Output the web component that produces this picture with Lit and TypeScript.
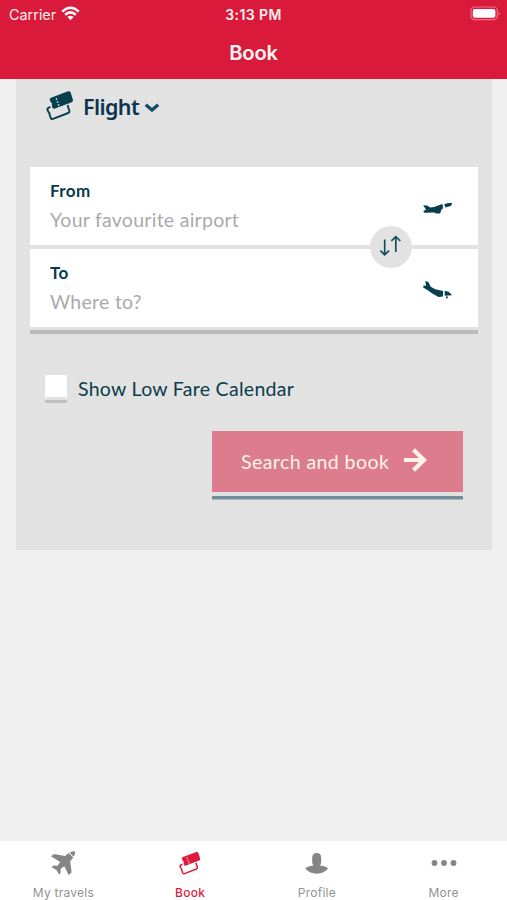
import { LitElement, html, svg, css } from "lit";
import { customElement, property } from "lit/decorators.js";

const tickets = html`<svg viewBox="0 0 28 31" fill="currentColor">
  <path fill-rule="evenodd" d="M5 7.7 L22 1.3 Q24 .7 24.7 2.6 L27 10 Q27.2 11.6 25.7 12.2 L9 18.6 Q7 19.2 6.3 17.2 L5.7 15.2 Q7 13.9 5 12.6 L3.7 10 Q3.3 8.5 5 7.7Z M9.6 8.4l.5 1.6 1.3-.5-.5-1.6Z M10.7 11.5l.5 1.6 1.3-.5-.5-1.6Z M11.7 14.5l.5 1.5 1.3-.5-.5-1.5Z"/>
  <path fill="none" stroke="currentColor" stroke-width="1.9" stroke-linejoin="round" d="M4.4 16.9 L2.4 17.8 Q1 18.4 1.5 20 L2.5 22 Q4 23.3 3.5 24.6 L4.8 28 Q5.5 29.4 7 28.8 L22.2 23 Q23.7 22.3 23.3 20.8 L21.5 15"/>
</svg>`;

const plane = html`<svg viewBox="0 0 25 25" fill="currentColor">
  <path d="M0 5.3 L3 3.1 L14 5 L17.6 2.1 L22.3 6.6 L19.2 10.2 L20.6 21.5 L17.6 24 L13.3 15.3 L9.6 18 L9.6 22.3 L8 23.6 L5.5 18.9 L.7 16.2 L2.3 14.5 L6.5 14.7 L9.2 10.9Z"/>
  <path d="M18.6 1.8 Q21 -.4 24 .4 Q24.5 3.4 22.5 5.5Z"/>
</svg>`;

const person = html`<svg viewBox="0 0 24 21" fill="currentColor">
  <path d="M7.2 5 Q7.2 0 11.7 0 Q16.2 0 16.2 5 V9 Q16 11.6 14.9 12.4 Q21 13 23.2 15.6 Q18.5 20.8 11.7 20.8 Q5 20.8 .2 15.6 Q2.6 13 8.5 12.4 Q7.4 11.6 7.2 9Z"/>
</svg>`;

const dots = html`<svg viewBox="0 0 26 8" fill="currentColor">
  ${[3.5, 13, 22.5].map((x) => svg`<circle cx=${x} cy="4" r="2.9" />`)}
</svg>`;

const takeOff = html`<svg viewBox="0 0 30 12" fill="currentColor">
  <path d="M.2 2.3 L4 2.5 L7.3 4.5 L11 4 L19.3 1.1 Q20.2 3.2 20 5.4 L18.5 6.5 L17.1 10.4 L13.3 10.6 L11.2 9.5 L1 9.7 L.4 8 L3 6.8Z"/>
  <path d="M21 1.5 Q25.5 -.7 29.2 .1 L28.2 2.7 L22.7 4.6Z"/>
</svg>`;

const landing = html`<svg viewBox="0 0 30 20" fill="currentColor">
  <path d="M2.3 .2 L5.2 .8 L7.8 5.8 L12.2 8.2 L20.2 9.9 L19.9 15.6 L15.5 15.9 L8.5 12 L4.8 9.2 L.2 6.4 L.5 4.6 L3 4.8Z"/>
  <path d="M21.7 10.1 Q26.2 10.2 28.8 14.2 L21.7 14.7Z M23 15.5h1.8v1.8h-1.8Z"/>
</svg>`;

@customElement("status-bar")
class StatusBar extends LitElement {
  static styles = css`
    :host { display: grid; grid-template-columns: 1fr auto 1fr; align-items: center; height: 28px; font-size: 14.4px; color: #fff0f1; }
    .carrier { display: flex; align-items: center; gap: 5px; padding-left: 9px; letter-spacing: 0; }
    .wifi { width: 19px; height: 15px; margin-top: -1px; }
    .time { font-weight: 600; font-size: 14px; letter-spacing: .4px; }
    .battery { justify-self: end; width: 31px; height: 15px; margin: -1px 6px 0 0; }
  `;
  render() {
    return html`
      <div class="carrier"><span>Carrier</span>
        <svg class="wifi" viewBox="0 0 19 15" fill="none" stroke="#fff" stroke-width="2.5">
          <path d="M1.2 5.6 Q9.5 -2.1 17.8 5.6 M4.1 8.8 Q9.5 3.9 14.9 8.8"/>
          <path fill="#fff" stroke="none" d="M6.4 11 Q9.5 8.4 12.6 11 L9.5 14.2Z"/>
        </svg>
      </div>
      <div class="time">3:13 PM</div>
      <svg class="battery" viewBox="0 0 31 15">
        <rect x=".9" y="1" width="26.4" height="12.6" rx="3.6" fill="none" stroke="#ea7085" stroke-width="1.2"/>
        <rect x="2.8" y="2.9" width="22.6" height="8.8" rx="2" fill="#fff"/>
        <path d="M28.6 5.2 Q31 7.3 28.6 9.4Z" fill="#ea7085"/>
      </svg>`;
  }
}

@customElement("airport-field")
class AirportField extends LitElement {
  @property() label = "";
  @property() hint = "";
  @property({ attribute: false }) icon: unknown;
  static styles = css`
    :host { display: flex; box-sizing: border-box; height: 78px; padding: 11px 25px 0 20px; justify-content: space-between; background: #fff; font-family: Lato, sans-serif; }
    .label { font-size: 17px; line-height: 25px; font-weight: 700; color: #073b49; letter-spacing: .4px; }
    .hint { font-size: 19.5px; line-height: 34px; color: #aaa; letter-spacing: .27px; }
    .icon { display: flex; align-items: center; width: 30px; height: 61px; color: #073f50; }
    .icon svg { display: block; width: 30px; }
  `;
  render() {
    return html`<div><div class="label">${this.label}</div><div class="hint">${this.hint}</div></div>
      <div class="icon">${this.icon}</div>`;
  }
}

@customElement("tab-bar")
class TabBar extends LitElement {
  static styles = css`
    :host { display: grid; grid-template-columns: repeat(4, 1fr); height: 59px; background: #fff; color: #929292; }
    .tab { display: flex; flex-direction: column; align-items: center; font-size: 12px; font-weight: 400; letter-spacing: .25px; }
    .active { color: #dc1b3d; font-weight: 500; }
    .icon { display: flex; align-items: center; justify-content: center; height: 44px; color: #858585; }
    .active .icon { color: #dc1b3d; }
    .name { line-height: 15px; }
    .plane svg { display: block; width: 25px; }
    .book svg { display: block; width: 22px; }
    .profile svg { display: block; width: 24px; }
    .more svg { display: block; width: 26px; }
  `;
  render() {
    const tabs = [
      { key: "plane", name: "My travels", icon: plane },
      { key: "book", name: "Book", icon: tickets },
      { key: "profile", name: "Profile", icon: person },
      { key: "more", name: "More", icon: dots },
    ];
    return tabs.map((t) => html`<div class="tab ${t.key === "book" ? "active" : ""}">
      <div class="icon ${t.key}">${t.icon}</div><div class="name">${t.name}</div></div>`);
  }
}

@customElement("app-root")
class AppRoot extends LitElement {
  static styles = css`
    :host { display: flex; flex-direction: column; height: 900px; background: #f0f0f0; font-family: Inter, sans-serif; }
    header { height: 79px; background: #da1a3a; color: #fff; }
    h1 { margin: 0; text-align: center; font-size: 20.2px; line-height: 49px; font-weight: 600; letter-spacing: -.25px; color: #fff5f5; }
    main { flex: 1; padding: 0 15px 0 16px; }
    .panel { box-sizing: border-box; height: 471px; padding: 11px 14px 0; background: #e2e2e2; font-family: Lato, sans-serif; }
    .kind { display: flex; height: 77px; padding-left: 16px; color: #073f50; }
    .tickets svg { display: block; width: 28px; height: 31px; }
    .kind-name { margin-left: 9px; font: 600 21.5px/33px "Noto Sans", sans-serif; color: #0a3450; letter-spacing: -.6px; }
    .chevron { width: 16px; height: 11px; margin: 12px 0 0 5px; }
    .fields { position: relative; display: flex; flex-direction: column; gap: 4px; }
    .fields::after { content: ""; height: 4px; margin-top: -1px; background: #bababa; }
    .swap { position: absolute; right: 66px; top: 59px; width: 42px; height: 42px; border-radius: 50%; background: #e2e2e2; }
    .swap svg { display: block; }
    .option { display: flex; align-items: flex-start; margin: 41px 0 0 15px; color: #0b3d4b; font-size: 19.5px; line-height: 27px; letter-spacing: .29px; }
    .check { width: 22px; height: 22px; margin-right: 11px; background: #fff; border-bottom: 3px solid #e2e2e2; box-shadow: 0 3px #c0c0c0; }
    .action { display: flex; align-items: center; box-sizing: border-box; width: 251px; height: 61px; margin: 29px 15px 0 auto; padding-left: 29px; background: #dd7c8d; color: #fff3e9; font-size: 19.5px; box-shadow: 0 4px #e2e2e2, 0 7.5px #728f99; }
    .action-text { width: 163px; letter-spacing: .43px; line-height: 60px; }
    .arrow { width: 23px; height: 24px; margin-top: -3px; }
  `;
  render() {
    return html`
      <header><status-bar></status-bar><h1>Book</h1></header>
      <main><section class="panel">
        <div class="kind">
          <div class="tickets">${tickets}</div>
          <div class="kind-name">Flight</div>
          <svg class="chevron" viewBox="0 0 16 11"><path d="M1.8 2.8 L8 8 L14.2 2.8" fill="none" stroke="#174d62" stroke-width="3.4"/></svg>
        </div>
        <div class="fields">
          <airport-field label="From" hint="Your favourite airport" .icon=${takeOff}></airport-field>
          <airport-field label="To" hint="Where to?" .icon=${landing}></airport-field>
          <div class="swap"><svg viewBox="0 0 42 42" fill="none" stroke="#174c5c" stroke-width="1.7">
            <path d="M14.7 13.5V28.5 M10.4 24.6l4.3 4.3 4.3-4.3 M25.8 26V11 M21.3 15l4.5-4.4 4.5 4.4"/></svg></div>
        </div>
        <div class="option"><div class="check"></div><span>Show Low Fare Calendar</span></div>
        <div class="action"><span class="action-text">Search and book</span>
          <svg class="arrow" viewBox="0 0 23 24" fill="none" stroke="#fff3e9" stroke-width="4.2"><path d="M0 12H20 M9.5 1.8L20 12 9.5 22.2"/></svg>
        </div>
      </section></main>
      <tab-bar></tab-bar>`;
  }
}
